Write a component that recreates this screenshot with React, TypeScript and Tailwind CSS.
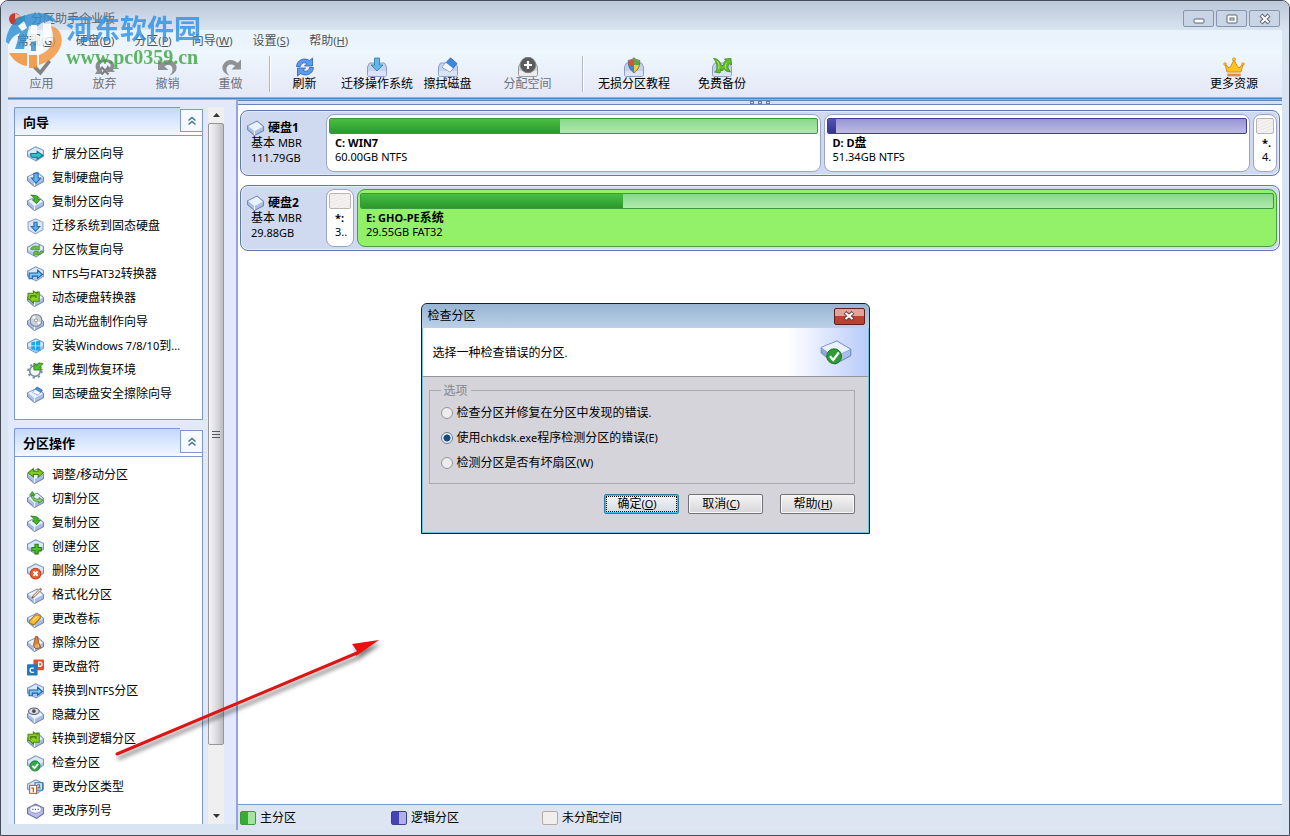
import React, { useState } from 'react';

type Item = { icon: string; label: string };

const MENU = ['常规(G)', '硬盘(D)', '分区(P)', '向导(W)', '设置(S)', '帮助(H)'];

const WIZARDS: Item[] = [
  { icon: 'extend', label: '扩展分区向导' },
  { icon: 'copyDisk', label: '复制硬盘向导' },
  { icon: 'copy', label: '复制分区向导' },
  { icon: 'migrate', label: '迁移系统到固态硬盘' },
  { icon: 'recover', label: '分区恢复向导' },
  { icon: 'ntfs', label: 'NTFS与FAT32转换器' },
  { icon: 'convert', label: '动态硬盘转换器' },
  { icon: 'cd', label: '启动光盘制作向导' },
  { icon: 'windows', label: '安装Windows 7/8/10到...' },
  { icon: 'gear', label: '集成到恢复环境' },
  { icon: 'erase', label: '固态硬盘安全擦除向导' },
];

const OPERATIONS: Item[] = [
  { icon: 'resize', label: '调整/移动分区' },
  { icon: 'split', label: '切割分区' },
  { icon: 'copy', label: '复制分区' },
  { icon: 'create', label: '创建分区' },
  { icon: 'remove', label: '删除分区' },
  { icon: 'format', label: '格式化分区' },
  { icon: 'label', label: '更改卷标' },
  { icon: 'wipe', label: '擦除分区' },
  { icon: 'letter', label: '更改盘符' },
  { icon: 'ntfs', label: '转换到NTFS分区' },
  { icon: 'hide', label: '隐藏分区' },
  { icon: 'convert', label: '转换到逻辑分区' },
  { icon: 'check', label: '检查分区' },
  { icon: 'type', label: '更改分区类型' },
  { icon: 'serial', label: '更改序列号' },
];

// Latin runs are set one size below the Chinese text
const Txt = ({ text }: { text: string }) => (
  <span className="whitespace-pre">
    {text.split(/([\x20-\x7e]+)/).map((part, i) =>
      i % 2 ? <span key={i} className="text-[11px]">{part}</span> : part
    )}
  </span>
);

// "帮助(H)" with the access key underlined
const Mnemonic = ({ text }: { text: string }) => {
  const [name, key] = text.replace(')', '').split('(');
  return (
    <span>
      {name}
      <span className="text-[11px]">(<u>{key}</u>)</span>
    </span>
  );
};

const Hex = () => (
  <g>
    <path d="M.5 5 8 .8 15.500 4V9.500L8.500 14 .5 9.500Z" fill="#dce9f9" stroke="#7594cc" />
    <path d="M1 7.500 8.500 10.500 15 7V9.300L8.500 13.500 1 9.200Z" fill="#a9c2ea" />
  </g>
);

const Slab = () => (
  <g>
    <path d="M.5 6.500 9.500 2 15.500 7V11L7 15.500 .5 10Z" fill="#a9bfe6" stroke="#7089bb" />
    <path d="M1 6.500 9.500 2.500 15 7.200 7 11.500Z" fill="#e9f2fd" />
    <path d="M7 11.500V15" stroke="#f5f9ff" />
  </g>
);

const ICONS: Record<string, React.ReactNode> = {
  extend: <><Hex /><path d="M3.500 7H9.500V5L15 9 9.500 12.500V10.500H5Q3.500 10.500 3.500 9Z" fill="#30c4c4" stroke="#16708c" /></>,
  copyDisk: <><Slab /><path d="M6.500 3H10.500V7.500H13L8.500 12.500 4 7.500H6.500Z" fill="#62b8ec" stroke="#2565ac" /></>,
  copy: <><Slab /><path d="M3.500 1 8 1.500C10 2 10.500 3 10.500 5H12.500L9 9 5 5.500H7C7 4 6 2.500 3.500 1Z" fill="#46b81e" stroke="#237a10" strokeWidth=".8" /></>,
  migrate: <><path d="M1 4 8 .8 15 4V11L8 15 1 11Z" fill="#dae6f8" stroke="#8aa3cf" /><path d="M6.500 4H9.500V8H12L8 12.500 4 8H6.500Z" fill="#58b0e8" stroke="#2b6cae" /></>,
  recover: <><Hex /><path d="M3.500 7C3.500 4 9 3 10 4.500L11.500 3V7.500H7L8.500 6C7.500 5 6 6 6 7.500ZM15.500 8.500C14.500 12 9 12.500 8 11.500L6.500 13V9H11L9.500 10.200C11 11 12.500 10 13 8.500Z" fill="#72c63b" stroke="#3d8623" strokeWidth=".7" /></>,
  ntfs: <><Hex /><path d="M2 12V6.500H10V4L14.500 8 10 11.500V9.500H5V12Z" fill="#79c9f4" stroke="#1d5ea8" /></>,
  convert: <><Slab /><path d="M1 3H6V1L9.500 3.500V2H11.500V10.500H6V12.500L2.500 9H1Z" fill="#8bd120" stroke="#47880f" /><path d="M3.500 8V5.500H8.500V7.500" fill="none" stroke="#396f0c" /></>,
  cd: <><Slab /><circle cx="8.500" cy="6" r="5.500" fill="#cbd2d9" stroke="#76828e" /><path d="M8.500 6 4.500 3 7 1.500ZM8.500 6 13 8 11 10Z" fill="#f7f9fa" /><circle cx="8.500" cy="6" r="1.500" fill="#fff" stroke="#7c858e" strokeWidth=".8" /></>,
  windows: <><Hex /><path d="M4 4 7.500 3.300V7H4ZM8.300 3.200 12.500 2.500V7H8.300ZM4 7.800H7.500V11.300L4 10.700ZM8.300 7.800H12.500V12.200L8.300 11.500Z" fill="#18a7f2" /></>,
  gear: <><circle cx="7.500" cy="8.500" r="5" fill="#f4f8fb" stroke="#75899b" strokeWidth="1.500" /><circle cx="7.500" cy="8.500" r="6.500" fill="none" stroke="#75899b" strokeWidth="1.500" strokeDasharray="2.200 2.900" /><path d="M15 1.500 12 5 14.500 7.500H6.500V1L9 3.500 11 .8Z" fill="#56bd2d" stroke="#2e841b" strokeWidth=".8" /></>,
  erase: <><Slab /><path d="M9.500 1 14.500 4 10.500 8.500 5.500 6Z" fill="#4a8fe2" stroke="#2f68b2" strokeWidth=".8" /><path d="M7.500 3.300 12.500 6.300 10.500 8.500 5.500 6Z" fill="#f6faff" /></>,
  resize: <><Slab /><path d="M1 5.500 6 1.500V4H10.500V1.500L15.500 5.500 10.500 9.500V7H6V9.500Z" fill="#82cc22" stroke="#43840f" /></>,
  split: <><Slab /><path d="M4 4H6L6.500 6.500C8 7.500 10 8 11.500 7.500V6L15 8.800 11 11.500V10C8 10.300 4.500 9 4 4Z" fill="#8bd36a" stroke="#38852b" strokeWidth=".8" /><path d="M2.500 4 5 .5 7.500 4Z" fill="#55b535" stroke="#38852b" strokeWidth=".8" /></>,
  create: <><Hex /><path d="M7.500 5H10.500V8H13.500V11H10.500V14H7.500V11H4.500V8H7.500Z" fill="#4cc322" stroke="#257d11" /></>,
  remove: <><Hex /><circle cx="8" cy="10" r="5" fill="#ee5c29" stroke="#c83e12" /><path d="M6 8 10 12M10 8 6 12" stroke="#fff" strokeWidth="1.800" /></>,
  format: <><Slab /><path d="M5.500 9.500 13.500 1.500" stroke="#a1765a" strokeWidth="2.500" /><path d="M6 9 12.500 2.500" stroke="#f3e6d7" strokeWidth="1" /><path d="M4.500 10.500 6 9" stroke="#5b4a43" /></>,
  label: <><Slab /><path d="M2.500 9 8 3.500 12.500 4V7L6.500 13 2.500 11.500Z" fill="#f6bd31" stroke="#a9741b" /><path d="M5.500 9 10 5" stroke="#ffe9a3" /></>,
  wipe: <><Slab /><path d="M8 1.500H10L11 7 13 12 8 13 6 10Z" fill="#d98236" stroke="#98511e" strokeWidth=".8" /><path d="M8.500 9V12M10.500 8.500V12" stroke="#ffd491" /></>,
  letter: <><rect x="6" y=".5" width="10" height="10" rx="1" fill="#e6502d" /><rect x="0" y="5" width="10" height="10.500" rx="1" fill="#1f7bbd" /><path d="M6.500 8.500H4L3 9.500V11.500L4 12.500H6.500" fill="none" stroke="#fff" strokeWidth="1.200" /><path d="M11 3H12.500L14 4V6L12.500 7H11Z" fill="none" stroke="#fff" strokeWidth="1.200" /></>,
  hide: <><Slab /><ellipse cx="6.500" cy="4" rx="5" ry="3" fill="#d9dde2" stroke="#555c66" /><circle cx="6.500" cy="3.800" r="1.800" fill="#4a4e55" /></>,
  check: <><Hex /><circle cx="7.500" cy="10.300" r="4.800" fill="#34a84a" stroke="#187a2d" strokeWidth=".8" /><path d="M5 10.300 7 12.300 10.500 8.300" fill="none" stroke="#fff" strokeWidth="1.700" /></>,
  type: <><Hex /><rect x="7.500" y="3.500" width="7" height="7" fill="#e4f3fc" stroke="#337bad" /><path d="M9.500 5.500H12V7L10 8.500H13" fill="none" stroke="#337bad" /><rect x="2.500" y="6" width="6.500" height="7.500" fill="#fff" stroke="#b75b34" /><path d="M4 8.500H6V12.500" fill="none" stroke="#b75b34" strokeWidth="1.200" /></>,
  serial: <><path d="M.5 5 8 1 15.500 4.500V10L9 14.500 .5 10Z" fill="#b6bce6" stroke="#686fab" /><ellipse cx="8" cy="6" rx="5.500" ry="3.500" fill="#fff" stroke="#8187bd" strokeWidth=".7" /><path d="M5 6H6M7.500 6H8.500M10 6H11" stroke="#484e8c" strokeWidth="1.200" /></>,
  disk: <Slab />,
};

const Icon = ({ name }: { name: string }) => (
  <svg className="h-[17px] w-[17px] shrink-0" viewBox="0 0 16 16" aria-hidden="true">{ICONS[name]}</svg>
);

const Tray = ({ gray = false }: { gray?: boolean }) => (
  <g>
    <path d="M1.500 10 3.500 6H18.500L20.500 10V17.500Q20.500 19.500 18.500 19.500H3.500Q1.500 19.500 1.500 17.500Z" fill={gray ? '#d2d2d4' : '#c5d2ec'} stroke={gray ? '#9a9a9d' : '#8b9dc4'} />
    <path d="M2 14H20V17.500Q20 19 18.500 19H3.500Q2 19 2 17.500Z" fill={gray ? '#ececee' : '#dbe4f6'} />
  </g>
);

const TOOL_ICONS: Record<string, React.ReactNode> = {
  apply: <path d="M2 11 5 8.500 9 13 17.500 2.500 20 5 9.500 18.500Z" fill="#808286" />,
  discard: <><path d="M3 14C-1 7 4 2 11 2S23 7 19 13L21 15H13V8L16 10.500C18 7 15 5 11 5S4.500 8 6.500 11L8 9V17H1Z" fill="#8b8d91" /><path d="M7.500 10 14.500 17.500M14.500 10 7.500 17.500" stroke="#7c7e82" strokeWidth="2.200" /></>,
  undo: <path d="M1 2.500V13H11.500L7.500 9.500C11 6.500 16 8 15.500 13 15.300 15.500 14 17 12.500 18.500 18 17 21 12 19 8 16 2 9 1.500 4.500 6Z" fill="#8f9195" />,
  redo: <path d="M21 2.500V12.500H11.500L15 9C11 6 6 8 6.500 13 6.700 15.500 8 17 9.500 18.500 4 17 1 12 3 8 6 2 13 1.500 17.500 6Z" fill="#8f9195" />,
  refresh: <><path d="M2.500 9.500C3 3 10 0 15.500 3.500L18.500 1V9H10.500L13 6.500C10 5 7 6 6.500 9.500Z" fill="#5e9bec" stroke="#2c5eb8" strokeWidth=".8" /><path d="M19.500 10.500C19 17 12 20 6.500 16.500L3.500 19V11H11.500L9 13.500C12 15 15 14 15.500 10.500Z" fill="#5e9bec" stroke="#2c5eb8" strokeWidth=".8" /></>,
  migrate: <><Tray /><path d="M8.500 1H13.500V8H17L11 14 5 8H8.500Z" fill="#62b6e5" stroke="#2a7ab3" strokeWidth=".8" /></>,
  wipe: <><Tray /><path d="M13.500 .8 20 6.500 13 15 5 10Z" fill="#3d86e2" stroke="#3469b0" strokeWidth=".8" /><path d="M9 5.700 16 11.300 13 15 5 10Z" fill="#f5f9ff" /></>,
  allocate: <><Tray gray /><circle cx="11" cy="8" r="7.700" fill="#5a5b5e" stroke="#7e7f82" /><path d="M11 4V12M7 8H15" stroke="#fff" strokeWidth="2.200" /></>,
  shield: <><Tray /><path d="M11 1C9 3 7.500 3.500 5.500 3.500V8H11Z" fill="#df5036" /><path d="M11 1C13 3 14.500 3.500 16.500 3.500V8H11Z" fill="#5ea83f" /><path d="M5.500 8C6 11 8 14 11 15.500V8Z" fill="#3f83d0" /><path d="M16.500 8C16 11 14 14 11 15.500V8Z" fill="#f5c83a" /><path d="M11 .8C9 2.500 7.500 3.300 5.300 3.300 5 8.500 6.500 13 11 15.700 15.500 13 17 8.500 16.700 3.300 14.500 3.300 13 2.500 11 .8Z" fill="none" stroke="#69707a" /></>,
  backup: <><Tray /><path d="M2.500 1.500C6 1.500 9 4 9.500 7L11 9 13 7C13 5 13.500 4 15 3.500L13.500 2 20 1.500 20.500 8 18.500 6.500C17 8 16.500 10 17.500 12L19.500 15 15 14 13 11.500 11 14 10 12 9 16 3.500 15 5.500 13.500C6.500 10 6 5 2.500 1.500Z" fill="#65bd2b" stroke="#39861a" strokeWidth=".8" /><path d="M6 4C8 6 8.500 9 7.500 12M15.500 6C14 8 14 10 15 12" fill="none" stroke="#b4e678" /></>,
  crown: <><path d="M2 7 6 11 8 8.500 11 3 14 8.500 16 11 20 7 18 15H4Z" fill="#ffc41d" stroke="#dd8a15" /><circle cx="11" cy="2.500" r="1.500" fill="#ffd34a" stroke="#dd8a15" /><circle cx="2" cy="7" r="1.300" fill="#ffc41d" stroke="#dd8a15" strokeWidth=".7" /><circle cx="20" cy="7" r="1.300" fill="#ffc41d" stroke="#dd8a15" strokeWidth=".7" /><path d="M4.500 18H17.500" stroke="#dc5b27" strokeWidth="2.500" /><path d="M5 18H17" stroke="#ffb347" /></>,
};

const Tool = ({ icon, label, className, disabled = false }: { icon: string; label: string; className: string; disabled?: boolean }) => (
  <button type="button" disabled={disabled} className={`flex shrink-0 flex-col items-center disabled:text-[#6d7078] ${className}`}>
    <svg className="h-5 w-[22px]" viewBox="0 0 22 20" aria-hidden="true">{TOOL_ICONS[icon]}</svg>
    <span className="leading-[14px]">{label}</span>
  </button>
);

const Separator = () => <div className="h-9 w-0.5 shrink-0 border-l border-[#b0b5bf] bg-white" />;

const Panel = ({ title, items, className }: { title: string; items: Item[]; className: string }) => (
  <section className="shrink-0">
    <header className="flex h-[29px] items-end">
      <h2 className="flex h-full flex-1 items-center rounded-tl-xs border border-r-0 border-[#7a99d0] bg-linear-to-b from-[#c3d8fc] to-[#f3f7ff] pl-2 text-[13px] font-bold">
        {title}
      </h2>
      <div className="h-[27px] border-r border-b border-[#7a99d0] bg-white">
        <button type="button" aria-label={`折叠${title}`} className="flex h-[23px] w-[22px] items-center justify-center border border-r-0 border-[#7a99d0] bg-[#f6faff]">
          <svg width="10" height="10" viewBox="0 0 10 10" fill="none" stroke="#416f96" strokeWidth="1.400"><path d="M1.500 4.500 5 1.500 8.500 4.500M1.500 8.500 5 5.500 8.500 8.500" /></svg>
        </button>
      </div>
    </header>
    <ul className={`border border-t-0 border-[#7a99d0] bg-white pt-1.5 ${className}`}>
      {items.map((item) => (
        <li key={item.label}>
          <button type="button" className="flex h-6 w-full items-center gap-2 pl-3">
            <Icon name={item.icon} />
            <Txt text={item.label} />
          </button>
        </li>
      ))}
    </ul>
  </section>
);

const ScrollBar = () => (
  <div className="flex w-4 shrink-0 flex-col items-center bg-[#efefef]">
    <button type="button" aria-label="向上滚动" className="flex h-4 w-full items-center justify-center">
      <svg width="7" height="4" viewBox="0 0 7 4"><path d="M0 4 3.500 0 7 4Z" fill="#333" /></svg>
    </button>
    <div className="flex w-4 flex-[620] flex-col items-center justify-center gap-0.5 rounded-xs border border-[#95979b] bg-linear-to-r from-[#f5f5f6] via-[#dedee0] to-[#bcbdc1]">
      <div className="h-px w-2 bg-[#55585e]" />
      <div className="h-px w-2 bg-[#55585e]" />
      <div className="h-px w-2 bg-[#55585e]" />
    </div>
    <div className="flex-[62]" />
    <button type="button" aria-label="向下滚动" className="flex h-[17px] w-full items-center justify-center">
      <svg width="7" height="4" viewBox="0 0 7 4"><path d="M0 0 3.500 4 7 0Z" fill="#333" /></svg>
    </button>
  </div>
);

const Hatch = () => (
  <div className="h-4 rounded-xs border border-[#b9b5b2] bg-[#f1efee] bg-[repeating-linear-gradient(160deg,#f4f2f1_0_2px,#ebe8e6_2px_3px)]" />
);

const Bar = ({ used, className, fill }: { used: number; className: string; fill: string }) => (
  <div className={`h-4 overflow-hidden rounded-xs border ${className}`}>
    <div className={`h-full ${fill}`} style={{ width: `${used}%` }} />
  </div>
);

const GREEN_BAR = 'border-[#3b9a3f] bg-linear-to-b from-[#86d88a] to-[#b1e9ae]';
const GREEN_FILL = 'bg-linear-to-b from-[#46bf40] to-[#2c982c]';
const BLUE_BAR = 'border-[#3c3c94] bg-linear-to-b from-[#9896d2] to-[#bdbbe6]';
const BLUE_FILL = 'bg-linear-to-b from-[#5352b8] to-[#34348e]';

const Partition = ({ name, size, bar, className }: { name: string; size: string; bar: React.ReactNode; className: string }) => (
  <div className={`min-w-0 rounded-lg border px-[2px] pt-[3px] ${className}`}>
    {bar}
    <div className="overflow-hidden pt-0.5 pl-1.5 leading-[14px]">
      <p className="font-bold"><Txt text={name} /></p>
      <p><Txt text={size} /></p>
    </div>
  </div>
);

const Disk = ({ name, size, children }: { name: string; size: string; children: React.ReactNode }) => (
  <section className="flex h-[66px] rounded-lg border border-[#5f76ae] bg-[#cfdaf0] p-[3px] pr-[2px] pl-1.5 inset-ring inset-ring-[#e5ecf8]">
    <div className="w-[79px] shrink-0 pt-1.5 leading-[15px]">
      <h3 className="flex h-[15px] items-center gap-1 font-bold"><Icon name="disk" />{name}</h3>
      <p className="pl-1"><Txt text="基本 MBR" /></p>
      <p className="pl-1"><Txt text={size} /></p>
    </div>
    <div className="flex min-w-0 flex-1 gap-[3px]">{children}</div>
  </section>
);

const LEGEND = [
  { label: '主分区', className: 'border-[#3b9a3f] bg-linear-to-r from-[#35ad31] from-50% to-[#a3e4a0] to-50%' },
  { label: '逻辑分区', className: 'border-[#3c3c94] bg-linear-to-r from-[#4444b8] from-50% to-[#b0afe8] to-50%' },
  { label: '未分配空间', className: 'border-[#b8a99a] bg-[#f1efee]' },
];

const OPTIONS = [
  '检查分区并修复在分区中发现的错误.',
  '使用chkdsk.exe程序检测分区的错误(E)',
  '检测分区是否有坏扇区(W)',
];

const CheckDialog = () => {
  const [selected, setSelected] = useState(1);

  return (
    <div role="dialog" aria-label="检查分区" className="w-[449px] rounded-t-md border border-[#15202c] bg-[#d5d4da] inset-ring inset-ring-[#6fc3dc]">
      <div className="flex h-6 items-center justify-between rounded-t-md bg-linear-to-b from-[#98b4d2] to-[#bbd1e8] pt-px pr-1 pl-1.5">
        <h2>检查分区</h2>
        <button type="button" aria-label="关闭" className="flex h-[17px] w-[31px] items-center justify-center rounded-xs border border-[#5b1f1c] bg-linear-to-b from-[#e3a498] from-45% to-[#bf4032] to-50%">
          <svg width="12" height="10" viewBox="0 0 12 10"><path d="M2 1.500 10 8.500M10 1.500 2 8.500" stroke="#6d3434" strokeWidth="4" /><path d="M2.500 2 9.500 8M9.500 2 2.500 8" stroke="#fff" strokeWidth="2.200" /></svg>
        </button>
      </div>
      <div className="mx-px flex h-[49px] items-center justify-between border-b border-[#92959c] bg-linear-to-r from-white from-82% to-[#b9cbfa] pt-0.5 pr-4 pl-2.5">
        <p><Txt text="选择一种检查错误的分区." /></p>
        <svg width="32" height="26" viewBox="0 0 34 28" aria-hidden="true">
          <path d="M1 8 18 1 33 10V17L16 26 1 14Z" fill="#8da6db" stroke="#6b86c2" />
          <path d="M1.500 8 18 1.500 32 10 15 18Z" fill="#eaf2fd" />
          <path d="M15 18 32 11V16.500L16 25Z" fill="#a9bfeb" />
          <circle cx="15" cy="17.500" r="8" fill="#2c9c35" stroke="#187020" />
          <path d="M10.500 17.500 14 21.500 20 13.500" fill="none" stroke="#fff" strokeWidth="2.500" />
        </svg>
      </div>
      <div className="pt-1.5 pr-3.5 pb-[19px] pl-[7px]">
        <fieldset className="border border-[#a9abb2] pt-0.5 pb-[7px] pl-[11px]">
          <legend className="px-[3px] leading-4 text-[#85878e]">选项</legend>
          {OPTIONS.map((option, i) => (
            <label key={option} className="flex h-[25px] items-center gap-1">
              <input
                type="radio"
                name="check"
                checked={selected === i}
                onChange={() => setSelected(i)}
                className="h-3 w-3 appearance-none rounded-full border border-[#92959b] bg-[#ececee] bg-radial checked:border-[#5f7f95] checked:from-[#1c4a78] checked:from-45% checked:to-[#f1f5f8] checked:to-55%"
              />
              <Txt text={option} />
            </label>
          ))}
        </fieldset>
        <div className="mt-2.5 flex justify-end">
          <button type="button" className="h-5 w-[75px] rounded-xs border border-[#2f7ea3] bg-linear-to-b from-[#f3f6f8] to-[#d5dbe2] pt-px pr-2 inset-ring inset-ring-[#45c0ea] outline-1 -outline-offset-3 outline-dotted outline-black">
            <Mnemonic text="确定(O)" />
          </button>
          <button type="button" className="ml-[9px] h-5 w-[75px] rounded-xs border border-[#707278] bg-linear-to-b from-[#f5f5f5] to-[#d6d6d9] pt-px pr-2 inset-ring inset-ring-[#f8f8f8]">
            <Mnemonic text="取消(C)" />
          </button>
          <button type="button" className="ml-[17px] h-5 w-[75px] rounded-xs border border-[#707278] bg-linear-to-b from-[#f5f5f5] to-[#d6d6d9] pt-px pr-2 inset-ring inset-ring-[#f8f8f8]">
            <Mnemonic text="帮助(H)" />
          </button>
        </div>
      </div>
    </div>
  );
};

const Watermark = () => (
  <div className="pointer-events-none absolute top-2.5 left-1 flex items-start gap-[3px] opacity-80">
    <svg width="58" height="60" viewBox="0 0 58 60" aria-hidden="true">
      <path d="M1 31C2 14 15 2 33 2 42 2 49 5 52 12 45 8 38 10 33 15L24 15 19 38H10L15 22C9 24 5 29 4 33Z" fill="#2f8ed2" />
      <path d="M13 15 19 10 22 17 17 20Z" fill="#fff" />
      <path d="M26 14H32V25H38V12H46V30H38V43H26Z" fill="#fff" />
      <path d="M26 31 31 30V40H26Z" fill="#2f8ed2" />
      <path d="M46 15C56 17 59 28 55 37 50 47 43 51 34 54V44C42 41 48 35 48 27 48 22 47 18 46 15Z" fill="#f3943a" />
      <path d="M4 42H22V55C14 54 8 49 4 42ZM24 44H32V57H24Z" fill="#f08c2c" />
    </svg>
    <div>
      <p className="text-[27px] leading-9 font-bold text-[#2b90e6]">河东软件园</p>
      <p className="font-['Liberation_Serif',serif] text-[20px] leading-5 font-bold text-[#3aa53e]">www.pc0359.cn</p>
    </div>
  </div>
);

const Arrow = () => (
  <svg className="pointer-events-none absolute top-[631px] left-[108px] drop-shadow-[2px_4px_2px_rgba(0,0,0,0.5)]" width="280" height="130" viewBox="0 0 280 130" aria-hidden="true">
    <path d="M8 122 248 21" stroke="#dd1515" strokeWidth="3" strokeLinecap="round" />
    <path d="M270 8 243 12 248 19 247 24Z" fill="#ee0c0c" />
  </svg>
);

const winButton = 'flex h-[17px] w-[31px] items-center justify-center rounded-xs border border-[#8795b2] bg-[#c9d5e4]';

const App: React.FC = () => {
  return (
    <div className="relative flex h-screen flex-col overflow-hidden rounded-t-lg border border-[#454b57] bg-[#d8e4f1] pr-[7px] pb-[5px] pl-[7px] font-['Noto_Sans','Noto_Sans_CJK_SC',sans-serif] text-[12px] leading-4 text-black">
      {/* Title bar */}
      <header className="-mx-[7px] flex h-[29px] shrink-0 items-center gap-[5px] bg-linear-to-b from-[#bcc8d9] to-[#d8e4f0] pt-1.5 pr-[9px] pl-2">
        <svg width="17" height="14" viewBox="0 0 17 14" aria-hidden="true">
          <ellipse cx="6" cy="7" rx="6" ry="6" fill="#c33a36" />
          <path d="M6 7 16 3V11L9 13Z" fill="#3f9b8f" />
          <path d="M6 1 12 4 6 7Z" fill="#efb3a0" />
        </svg>
        <h1 className="text-[#5c6673]">分区助手企业版</h1>
        <div className="ml-auto flex gap-0.5">
          <button type="button" aria-label="最小化" className={winButton}>
            <svg width="12" height="12" viewBox="0 0 12 12"><rect x="1" y="6" width="10" height="4" rx="1" fill="#fff" stroke="#5c6472" /></svg>
          </button>
          <button type="button" aria-label="还原" className={winButton}>
            <svg width="12" height="12" viewBox="0 0 12 12"><rect x="1" y="2" width="10" height="8" rx="1" fill="#fff" stroke="#5c6472" /><rect x="4" y="5" width="4" height="2" fill="#fff" stroke="#5c6472" /></svg>
          </button>
          <button type="button" aria-label="关闭" className={winButton}>
            <svg width="12" height="12" viewBox="0 0 12 12"><path d="M2 2 10 10M10 2 2 10" stroke="#5c6472" strokeWidth="4" /><path d="M2.500 2.500 9.500 9.500M9.500 2.500 2.500 9.500" stroke="#fff" strokeWidth="2" /></svg>
          </button>
        </div>
      </header>

      {/* Menu bar */}
      <nav className="flex h-[21px] shrink-0 items-center gap-0.5 bg-linear-to-b from-[#e9f3fc] to-[#edf5fd] text-[#4f5359]">
        {MENU.map((item) => (
          <button key={item} type="button" className="px-[9px]"><Mnemonic text={item} /></button>
        ))}
      </nav>

      {/* Toolbar */}
      <div className="flex h-[46px] shrink-0 items-center bg-linear-to-b from-[#eef7fe] to-[#e5e8f6] pr-5 pl-[2px]">
        <Tool icon="apply" label="应用" className="w-[63px]" disabled />
        <Tool icon="discard" label="放弃" className="w-[63px]" disabled />
        <Tool icon="undo" label="撤销" className="w-[63px]" disabled />
        <Tool icon="redo" label="重做" className="mr-[7px] w-[63px]" disabled />
        <Separator />
        <Tool icon="refresh" label="刷新" className="w-[67px]" />
        <Tool icon="migrate" label="迁移操作系统" className="w-[78px]" />
        <Tool icon="wipe" label="擦拭磁盘" className="w-[63px]" />
        <Tool icon="allocate" label="分配空间" className="mr-1.5 w-[97px]" disabled />
        <Separator />
        <Tool icon="shield" label="无损分区教程" className="w-[100px]" />
        <Tool icon="backup" label="免费备份" className="w-[76px]" />
        <Tool icon="crown" label="更多资源" className="ml-auto w-14" />
      </div>
      <div className="h-[3px] shrink-0 border-y border-t-[#a3abbd] border-b-[#8db2dd] bg-[#4c86c6]" />

      {/* Body */}
      <div className="flex min-h-0 flex-1">
        <aside className="flex w-[228px] shrink-0 pb-1.5">
          <div className="flex min-w-0 flex-1 bg-[#e2e9fc] pt-[7px] pl-1.5">
            <div className="flex w-[189px] shrink-0 flex-col gap-2 overflow-hidden">
              <Panel title="向导" items={WIZARDS} className="pb-[13px]" />
              <Panel title="分区操作" items={OPERATIONS} className="pb-2" />
            </div>
            <div className="ml-[5px] flex"><ScrollBar /></div>
          </div>
        </aside>

        <main className="flex min-w-0 flex-1 flex-col border-l-2 border-[#93a6d6]">
          <div className="flex h-[5px] shrink-0 items-center justify-center gap-1 border-y border-[#6585bb] bg-[#d3e1f4]">
            <div className="h-[3px] w-1 border border-[#7080a0]" />
            <div className="h-[3px] w-1 border border-[#7080a0]" />
            <div className="h-[3px] w-1 border border-[#7080a0]" />
          </div>
          <div className="flex flex-1 flex-col gap-[9px] bg-white px-[2px] pt-[5px]">
            <Disk name="硬盘1" size="111.79GB">
              <Partition
                name="C: WIN7"
                size="60.00GB NTFS"
                className="flex-[495] border-[#9aa3cb] bg-white"
                bar={<Bar used={47.3} className={GREEN_BAR} fill={GREEN_FILL} />}
              />
              <Partition
                name="D: D盘"
                size="51.34GB NTFS"
                className="flex-[426] border-[#9aa3cb] bg-white"
                bar={<Bar used={2} className={BLUE_BAR} fill={BLUE_FILL} />}
              />
              <Partition name="*." size="4." className="w-6 shrink-0 border-[#9aa3cb] bg-white" bar={<Hatch />} />
            </Disk>
            <Disk name="硬盘2" size="29.88GB">
              <Partition name="*:" size="3.." className="w-7 shrink-0 border-[#9aa3cb] bg-white" bar={<Hatch />} />
              <Partition
                name="E: GHO-PE系统"
                size="29.55GB FAT32"
                className="flex-1 border-[#4b9a45] bg-[#93f169]"
                bar={<Bar used={28.7} className={GREEN_BAR} fill={GREEN_FILL} />}
              />
            </Disk>
          </div>
          <footer className="flex h-[26px] shrink-0 items-center border-t border-[#7b99cf] bg-[#dce5f1] pl-[2px]">
            {LEGEND.map((entry) => (
              <div key={entry.label} className="flex w-[151px] items-center gap-1">
                <div className={`h-3.5 w-4 rounded-xs border ${entry.className}`} />
                <span>{entry.label}</span>
              </div>
            ))}
          </footer>
        </main>
      </div>

      {/* Overlays */}
      <div className="absolute inset-0 flex items-center justify-center">
        <CheckDialog />
      </div>
      <Arrow />
      <Watermark />
    </div>
  );
};

export default App;
